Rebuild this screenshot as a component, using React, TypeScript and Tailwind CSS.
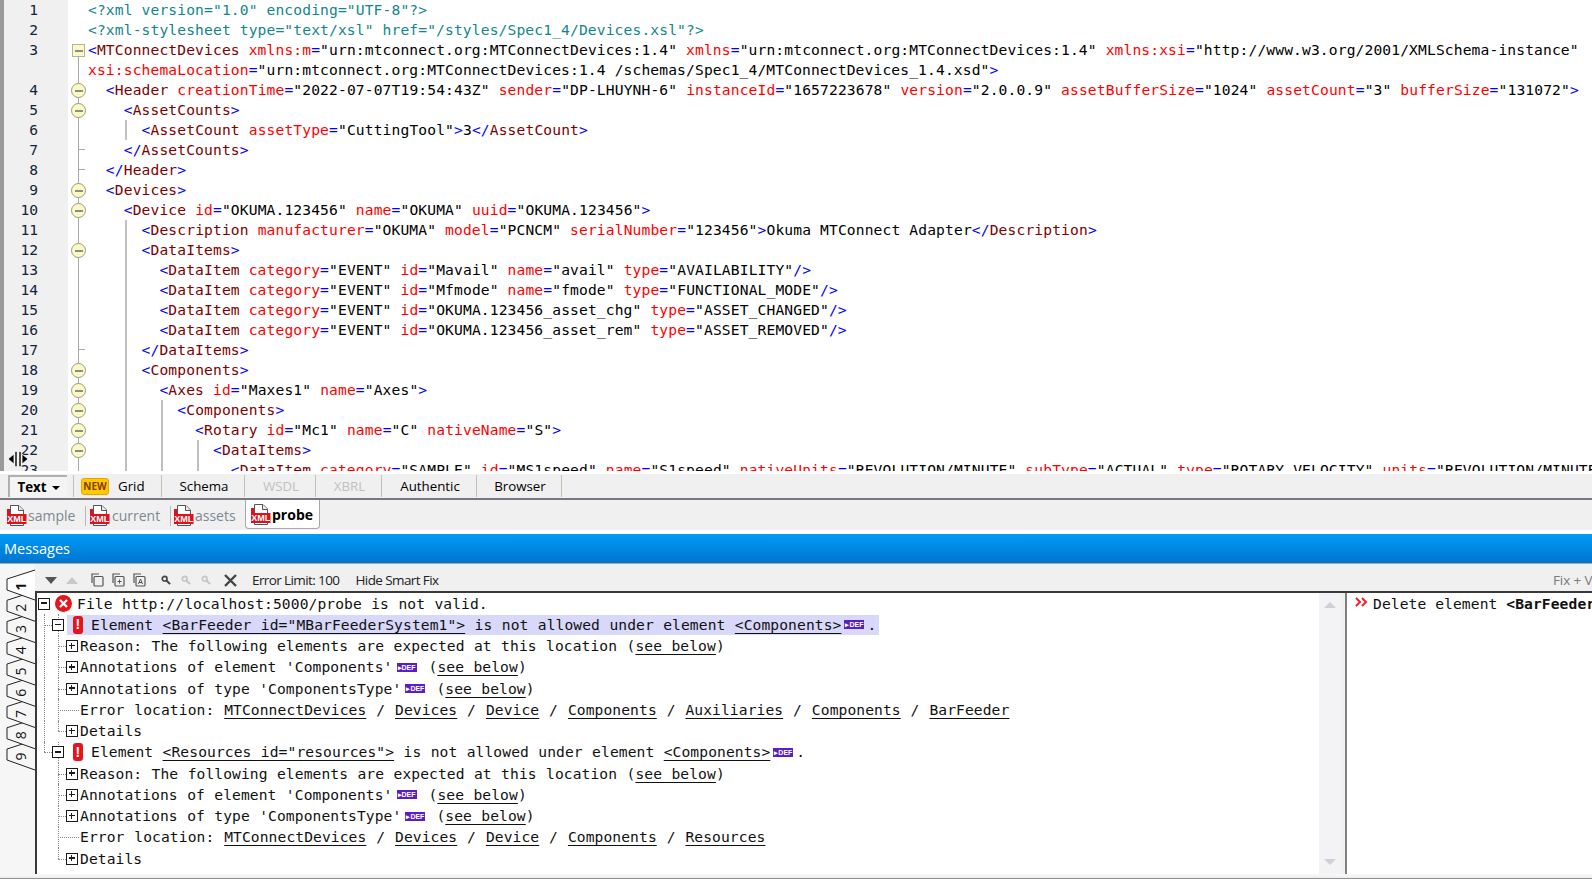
import React from 'react';

type EditorLine = {
  no?: number;
  text: string;
  fold?: 'square' | 'circle' | 'tick';
  guides?: number[];
};

const editorLines: EditorLine[] = [
  { no: 1, text: '<?xml version="1.0" encoding="UTF-8"?>' },
  { no: 2, text: '<?xml-stylesheet type="text/xsl" href="/styles/Spec1_4/Devices.xsl"?>' },
  { no: 3, fold: 'square', text: '<MTConnectDevices xmlns:m="urn:mtconnect.org:MTConnectDevices:1.4" xmlns="urn:mtconnect.org:MTConnectDevices:1.4" xmlns:xsi="http://www.w3.org/2001/XMLSchema-instance"' },
  { text: 'xsi:schemaLocation="urn:mtconnect.org:MTConnectDevices:1.4 /schemas/Spec1_4/MTConnectDevices_1.4.xsd">' },
  { no: 4, fold: 'circle', text: '  <Header creationTime="2022-07-07T19:54:43Z" sender="DP-LHUYNH-6" instanceId="1657223678" version="2.0.0.9" assetBufferSize="1024" assetCount="3" bufferSize="131072">' },
  { no: 5, fold: 'circle', text: '    <AssetCounts>' },
  { no: 6, guides: [37], text: '      <AssetCount assetType="CuttingTool">3</AssetCount>' },
  { no: 7, fold: 'tick', text: '    </AssetCounts>' },
  { no: 8, fold: 'tick', text: '  </Header>' },
  { no: 9, fold: 'circle', text: '  <Devices>' },
  { no: 10, fold: 'circle', text: '    <Device id="OKUMA.123456" name="OKUMA" uuid="OKUMA.123456">' },
  { no: 11, guides: [37], text: '      <Description manufacturer="OKUMA" model="PCNCM" serialNumber="123456">Okuma MTConnect Adapter</Description>' },
  { no: 12, fold: 'circle', guides: [37], text: '      <DataItems>' },
  { no: 13, guides: [37], text: '        <DataItem category="EVENT" id="Mavail" name="avail" type="AVAILABILITY"/>' },
  { no: 14, guides: [37], text: '        <DataItem category="EVENT" id="Mfmode" name="fmode" type="FUNCTIONAL_MODE"/>' },
  { no: 15, guides: [37], text: '        <DataItem category="EVENT" id="OKUMA.123456_asset_chg" type="ASSET_CHANGED"/>' },
  { no: 16, guides: [37], text: '        <DataItem category="EVENT" id="OKUMA.123456_asset_rem" type="ASSET_REMOVED"/>' },
  { no: 17, fold: 'tick', guides: [37], text: '      </DataItems>' },
  { no: 18, fold: 'circle', guides: [37], text: '      <Components>' },
  { no: 19, fold: 'circle', guides: [37], text: '        <Axes id="Maxes1" name="Axes">' },
  { no: 20, fold: 'circle', guides: [37, 73], text: '          <Components>' },
  { no: 21, fold: 'circle', guides: [37, 73], text: '            <Rotary id="Mc1" name="C" nativeName="S">' },
  { no: 22, fold: 'circle', guides: [37, 73, 109], text: '              <DataItems>' },
  { no: 23, guides: [37, 73, 109], text: '                <DataItem category="SAMPLE" id="MS1speed" name="S1speed" nativeUnits="REVOLUTION/MINUTE" subType="ACTUAL" type="ROTARY_VELOCITY" units="REVOLUTION/MINUTE"/>' },
];

// rough xml colouring, good enough for the lines above
function colorXml(src: string) {
  if (src.startsWith('<?')) return <span className="text-[#12868a]">{src}</span>;
  const out: React.ReactNode[] = [];
  const re = /(<\/?)([\w:.-]+)|(\/?>)|([\w:.-]+)(=)("[^"]*")|(\s+|[^<>\s]+)/g;
  let m: RegExpExecArray | null;
  let i = 0;
  while ((m = re.exec(src))) {
    if (m[1]) {
      out.push(<span key={i++} className="text-[#0000ff]">{m[1]}</span>);
      out.push(<span key={i++} className="text-[#800000]">{m[2]}</span>);
    } else if (m[3]) {
      out.push(<span key={i++} className="text-[#0000ff]">{m[3]}</span>);
    } else if (m[4]) {
      out.push(<span key={i++} className="text-[#ff0000]">{m[4]}</span>);
      out.push(<span key={i++} className="text-[#0000ff]">{m[5]}</span>);
      out.push(<span key={i++}>{m[6]}</span>);
    } else {
      out.push(<span key={i++}>{m[7]}</span>);
    }
  }
  return out;
}

function FoldMark({ kind, idx }: { kind?: EditorLine['fold']; idx: number }) {
  return (
    <div className="relative w-[20px] shrink-0 bg-white">
      {idx >= 2 && (
        <span className={`absolute left-[10px] w-px bg-[#a9a9a9] ${idx === 2 ? 'top-[10px] bottom-0' : 'top-0 bottom-0'}`} />
      )}
      {kind === 'tick' && <span className="absolute left-[11px] top-[9px] h-px w-[6px] bg-[#a9a9a9]" />}
      {kind === 'circle' && (
        <span className="absolute left-[3px] top-[3px] flex h-[15px] w-[15px] items-center justify-center rounded-full border border-[#9a9a80] bg-[#fbf9c4]">
          <span className="h-[2px] w-[8px] bg-[#8c8c8c]" />
        </span>
      )}
      {kind === 'square' && (
        <span className="absolute left-[4px] top-[4px] flex h-[13px] w-[13px] items-center justify-center border border-[#b4b49c] bg-[#fbf9c4]">
          <span className="h-[2px] w-[8px] bg-[#8c8c8c]" />
        </span>
      )}
    </div>
  );
}

function ResizeCursor() {
  return (
    <svg className="absolute left-[3px] top-[451px]" width="22" height="16" viewBox="0 0 22 16">
      <path d="M1 8 L7 3 V13 Z M21 8 L15 3 V13 Z" fill="#000" stroke="#fff" strokeWidth="0.8" />
      <rect x="8" y="0.5" width="2" height="15" fill="#000" stroke="#fff" strokeWidth="0.6" />
      <rect x="12" y="0.5" width="2" height="15" fill="#000" stroke="#fff" strokeWidth="0.6" />
    </svg>
  );
}

function Editor() {
  return (
    <div className="relative h-[471px] shrink-0 overflow-hidden border-l-[4px] border-[#9a9a9a] font-['DejaVu_Sans_Mono',monospace] text-[14.62px] text-black">
      {editorLines.map((line, idx) => (
        <div key={idx} className="flex h-5 leading-5">
          <div className="w-[64px] shrink-0 bg-[#f0f0f0] pr-[30px] text-right text-[#13233c]">{line.no}</div>
          <FoldMark kind={line.fold} idx={idx} />
          <div className="relative flex-1 whitespace-pre tracking-[0.13px]">
            {line.guides?.map((g) => (
              <span key={g} className="absolute top-0 bottom-0 w-[2px] bg-[#c0c0c0]" style={{ left: g }} />
            ))}
            {colorXml(line.text)}
          </div>
        </div>
      ))}
      <ResizeCursor />
    </div>
  );
}

const viewTabs = [
  { label: 'Schema', w: 'w-[83px]' },
  { label: 'WSDL', w: 'w-[71px]', off: true },
  { label: 'XBRL', w: 'w-[66px]', off: true },
  { label: 'Authentic', w: 'w-[95px]' },
  { label: 'Browser', w: 'w-[85px]' },
];

function ViewTabs() {
  return (
    <div className="flex h-[24px] shrink-0 items-center bg-[#f0f0f0] pl-[8px] text-[13.3px] text-black">
      <div className="flex h-[22px] w-[59px] items-center justify-center gap-[5px] border-2 border-b-0 border-r-0 border-[#b0b0b0] bg-[#f4f4f4] pt-[1px] font-bold">
        Text
        <span className="h-0 w-0 border-x-[4px] border-t-[4px] border-x-transparent border-t-black" />
      </div>
      <div className="ml-[6px] flex h-[22px] w-[89px] items-center border-x border-[#c4c0b8] pl-[7px]">
        <span className="flex h-[17px] w-[28px] items-center justify-center rounded-[3px] border border-[#f0a000] bg-[#ffc800] text-[10px] font-bold text-[#804000]">
          NEW
        </span>
        <span className="ml-[9px] pt-[1px]">Grid</span>
      </div>
      {viewTabs.map((t) => (
        <div key={t.label} className={`flex h-[22px] items-center justify-center border-r border-[#c4c0b8] pt-[1px] pl-[2px] ${t.w} ${t.off ? 'text-[#c0c0c0]' : ''}`}>
          {t.label}
        </div>
      ))}
    </div>
  );
}

function XmlIcon() {
  return (
    <svg className="shrink-0" width="20" height="21" viewBox="0 0 20 21">
      <path d="M3.5 .5 H12 L16.5 5 V20.5 H3.5 Z" fill="#fff" stroke="#555" />
      <path d="M11.5 .5 V5.5 H16.5" fill="#e8e8e8" stroke="#555" />
      <rect x="0" y="9" width="19.5" height="10" fill="#e0101c" />
      <rect x="0" y="4" width="3" height="5" fill="#e0101c" />
      <text x="9.75" y="17" textAnchor="middle" fontSize="9" fontFamily="Liberation Sans, sans-serif" fontWeight="700" fill="#fff">XML</text>
    </svg>
  );
}

function DocTabs() {
  return (
    <div className="flex h-[30px] shrink-0 items-start bg-[#f0f0f0] pl-[7px] pt-[1px] font-['Open_Sans',sans-serif] text-[14px] text-[#7c8894]">
      <div className="flex h-[28px] w-[78px] items-center gap-[1px]"><XmlIcon />sample</div>
      <span className="mt-[5px] h-[20px] w-px bg-[#b8b8b8]" />
      <div className="ml-[4px] flex h-[28px] w-[80px] items-center gap-[2px]"><XmlIcon />current</div>
      <span className="mt-[5px] h-[20px] w-px bg-[#b8b8b8]" />
      <div className="ml-[3px] flex h-[28px] w-[71px] items-center gap-[1px]"><XmlIcon />assets</div>
      <div className="-mt-[1px] flex h-[29px] w-[75px] items-center gap-[1px] rounded-b-[4px] border border-t-0 border-[#a8a8a8] bg-white pl-[5px] pt-[1px] font-bold text-black"><XmlIcon />probe</div>
    </div>
  );
}

function CopyIcon({ mark }: { mark?: string }) {
  return (
    <svg width="13" height="14" viewBox="0 0 13 14" fill="none" stroke="#555" strokeWidth="1.2">
      <path d="M1 10 V1 H8" />
      <rect x="3" y="3.5" width="9" height="9.5" rx="1" />
      {mark === 'plus' && <path d="M5.5 8.5 H9.5 M7.5 6.5 V10.5" strokeWidth="1" />}
      {mark === 'a' && <path d="M5.5 11 L7.5 6 L9.5 11 M6 9.5 H9" strokeWidth="1" />}
    </svg>
  );
}

function FindIcon({ color }: { color: string }) {
  return (
    <svg width="10" height="11" viewBox="0 0 11 12" fill="none" stroke={color} strokeWidth="1.8">
      <circle cx="4" cy="4" r="2.6" />
      <path d="M6 6 L10 10" strokeWidth="2.2" />
    </svg>
  );
}

function Toolbar() {
  return (
    <div className="flex h-[27px] shrink-0 items-center bg-[#f0f0f0] pt-[5px] font-['Open_Sans',sans-serif] text-[13.5px] tracking-[-0.6px] text-[#222]">
      <span className="ml-[10px] h-0 w-0 border-x-[6px] border-t-[7px] border-x-transparent border-t-[#555]" />
      <span className="ml-[9px] h-0 w-0 border-x-[6px] border-b-[7px] border-x-transparent border-b-[#c8c8c8]" />
      <span className="ml-[13px] flex gap-[8px]">
        <CopyIcon />
        <CopyIcon mark="plus" />
        <CopyIcon mark="a" />
      </span>
      <span className="ml-[15px] flex gap-[10px]">
        <FindIcon color="#444" />
        <FindIcon color="#c4c4c4" />
        <FindIcon color="#c4c4c4" />
      </span>
      <svg className="ml-[13px]" width="13" height="13" viewBox="0 0 13 13" stroke="#444" strokeWidth="2.4">
        <path d="M1 1 L12 12 M12 1 L1 12" />
      </svg>
      <span className="ml-[15px]">Error Limit: 100</span>
      <span className="ml-[16px]">Hide Smart Fix</span>
      <span className="ml-auto w-[39px] overflow-hidden whitespace-nowrap tracking-[-0.1px] text-[#7a7a7a]">Fix + Validate</span>
    </div>
  );
}

function MessageTabs() {
  const tabs = [8, 7, 6, 5, 4, 3, 2, 1, 0];
  return (
    <svg className="absolute left-0 top-0" width="36" height="220" viewBox="0 565 36 220">
      {tabs.map((i) => {
        const y = 21.25 * i;
        return (
          <g key={i}>
            <path
              d={`M35 ${571 + y} L7 ${580 + y} V${591 + y} L35 ${601 + y}`}
              fill={i === 0 ? '#fff' : '#f6f6f6'}
              stroke="#222"
            />
            <text
              x="0"
              y="0"
              transform={`translate(26 ${587.5 + y}) rotate(-90)`}
              textAnchor="middle"
              fontSize="14"
              fontWeight={i === 0 ? 700 : 400}
              fontFamily="Open Sans, sans-serif"
              fill="#111"
            >
              {i + 1}
            </text>
          </g>
        );
      })}
    </svg>
  );
}

function TreeBox({ open }: { open: boolean }) {
  return (
    <span className="relative inline-block h-[12px] w-[12px] shrink-0 border-[1.5px] border-[#1a1a1a] bg-white">
      <span className="absolute left-[1.5px] top-[3.75px] h-[1.5px] w-[6px] bg-[#1a1a1a]" />
      {!open && <span className="absolute left-[3.75px] top-[1.5px] h-[6px] w-[1.5px] bg-[#1a1a1a]" />}
    </span>
  );
}

function Def({ className = '' }: { className?: string }) {
  return (
    <span className={`inline-flex h-[9px] w-[20px] shrink-0 items-center justify-center bg-[#5a1fc4] font-['Liberation_Sans',sans-serif] text-[7px] font-bold leading-none tracking-normal text-white ${className}`}>
      ▸DEF
    </span>
  );
}

function RedBang() {
  return (
    <span className="flex h-[18px] w-[10px] shrink-0 items-center justify-center rounded-[3px] bg-[#e8141c] font-['Liberation_Sans',sans-serif] text-[14px] font-bold text-white">
      !
    </span>
  );
}

function RedCross() {
  return (
    <svg className="shrink-0" width="17" height="17" viewBox="0 0 17 17">
      <circle cx="8.5" cy="8.5" r="8.5" fill="#e8141c" />
      <path d="M5 5 L12 12 M12 5 L5 12" stroke="#fff" strokeWidth="2.4" />
    </svg>
  );
}

const Link = ({ children }: { children: React.ReactNode }) => (
  <span className="underline decoration-1 underline-offset-[3px]">{children}</span>
);

// tree connector bits, they sit on top of the row
function VLine({ x, half }: { x: number; half?: boolean }) {
  return (
    <span
      className={`absolute top-0 border-l border-dotted border-[#888] ${half ? 'h-1/2' : 'bottom-0'}`}
      style={{ left: x }}
    />
  );
}
function HLine({ x, w }: { x: number; w: number }) {
  return <span className="absolute top-1/2 border-t border-dotted border-[#888]" style={{ left: x, width: w }} />;
}

function ChildRows({ path, guideLast }: { path: string[]; guideLast?: boolean }) {
  const rows = [
    <>
      <TreeBox open={false} />
      <span className="ml-[2px]">Reason: The following elements are expected at this location (<Link>see below</Link>)</span>
    </>,
    <>
      <TreeBox open={false} />
      <span className="ml-[2px]">Annotations of element 'Components'</span>
      <Def className="ml-[4px] mr-[12px]" />
      <span>(<Link>see below</Link>)</span>
    </>,
    <>
      <TreeBox open={false} />
      <span className="ml-[2px]">Annotations of type 'ComponentsType'</span>
      <Def className="ml-[4px] mr-[11px]" />
      <span>(<Link>see below</Link>)</span>
    </>,
    <>
      <span className="w-[12px] shrink-0" />
      <span className="ml-[2px] [word-spacing:1px]">
        Error location:{' '}
        {path.map((p, i) => (
          <span key={p + i}>
            {i > 0 && ' / '}
            <Link>{p}</Link>
          </span>
        ))}
      </span>
    </>,
    <>
      <TreeBox open={false} />
      <span className="ml-[2px]">Details</span>
    </>,
  ];
  return (
    <>
      {rows.map((row, i) => (
        <div key={i} className="relative flex h-[21.25px] items-center pl-[29px]">
          {guideLast && <VLine x={7} />}
          <VLine x={21} half={i === rows.length - 1} />
          <HLine x={21} w={i === 3 ? 21 : 8} />
          {row}
        </div>
      ))}
    </>
  );
}

function ElementRow({ hl, children, last }: { hl?: boolean; children: React.ReactNode; last?: boolean }) {
  return (
    <div className="relative flex h-[21.25px] items-center pl-[15px]">
      <VLine x={7} half={last} />
      <HLine x={7} w={8} />
      <VLine x={21} />
      <TreeBox open />
      <div className={`ml-[3px] flex h-[20px] items-center pl-[6px] pr-[3px] ${hl ? 'bg-[#d8d8fa]' : ''}`}>
        <RedBang />
        <span className="ml-[8px]">{children}</span>
      </div>
    </div>
  );
}

function MessageTree() {
  return (
    <div className="min-w-0 flex-1 overflow-hidden whitespace-pre font-['DejaVu_Sans_Mono',monospace] text-[14.62px] tracking-[0.09px] [word-spacing:0.5px] text-[#111]">
      <div className="relative flex h-[21.25px] items-center pl-[1px]">
        <TreeBox open />
        <span className="ml-[5px]"><RedCross /></span>
        <span className="ml-[5px]">File http://localhost:5000/probe is not valid.</span>
      </div>
      <ElementRow hl>
        <span className="inline-flex items-center">
          Element <Link>{'<BarFeeder id="MBarFeederSystem1">'}</Link> is not allowed under element <Link>{'<Components>'}</Link>
          <Def className="ml-[3px] mr-[3px]" />.
        </span>
      </ElementRow>
      <ChildRows guideLast path={['MTConnectDevices', 'Devices', 'Device', 'Components', 'Auxiliaries', 'Components', 'BarFeeder']} />
      <ElementRow last>
        <span className="inline-flex items-center">
          Element <Link>{'<Resources id="resources">'}</Link> is not allowed under element <Link>{'<Components>'}</Link>
          <Def className="ml-[3px] mr-[3px]" />.
        </span>
      </ElementRow>
      <ChildRows path={['MTConnectDevices', 'Devices', 'Device', 'Components', 'Resources']} />
    </div>
  );
}

function Messages() {
  return (
    <div className="relative flex min-h-0 flex-1 flex-col bg-[#f6f6f6]">
      <div className="flex h-[29px] shrink-0 items-center bg-gradient-to-b from-[#009cf5] to-[#0074cf] pl-[4px] font-['Open_Sans',sans-serif] text-[14.5px] text-white">
        Messages
      </div>
      <div className="h-px shrink-0 bg-[#a8a8a8]" />
      <div className="relative flex min-h-0 flex-1">
        <div className="relative h-[310px] w-[35px] shrink-0">
          <MessageTabs />
        </div>
        <div className="flex h-[310px] min-w-0 flex-1 flex-col">
          <Toolbar />
          <div className="flex min-h-0 flex-1 border-l-2 border-t-2 border-[#3a3a3a] bg-white">
            <MessageTree />
            <div className="flex w-[22px] shrink-0 flex-col items-center justify-between bg-[#f3f3f5] py-[9px]">
              <span className="h-0 w-0 border-x-[6px] border-b-[6px] border-x-transparent border-b-[#d0d0d8]" />
              <span className="h-0 w-0 border-x-[6px] border-t-[6px] border-x-transparent border-t-[#d0d0d8]" />
            </div>
            <div className="w-[4px] shrink-0 bg-[#f0f0f0]" />
            <div className="min-w-0 w-[247px] shrink-0 overflow-hidden whitespace-pre border-l-2 border-[#808080] pl-[8px] font-['DejaVu_Sans_Mono',monospace] text-[14.62px] tracking-[0.09px] text-[#111]">
              <div className="flex h-[21.25px] items-center">
                <svg className="mr-[5px] shrink-0 -translate-y-[2px]" width="13" height="10" viewBox="0 0 13 10" fill="none" stroke="#f0202c" strokeWidth="2">
                  <path d="M1 1 L5 5 L1 9 M7 1 L11 5 L7 9" />
                </svg>
                <span>Delete element <b>{'<BarFeeder id="MBarFeederSystem1">'}</b></span>
              </div>
            </div>
          </div>
        </div>
      </div>
      <div className="h-[2px] shrink-0 bg-[#f0f0f0]" />
      <div className="h-px shrink-0 bg-[#909090]" />
      <div className="h-[1px] shrink-0 bg-white" />
    </div>
  );
}

export default function App() {
  return (
    <div className="flex h-[880px] w-[1592px] flex-col overflow-hidden bg-white">
      <Editor />
      <div className="h-[3px] shrink-0 bg-white" />
      <div className="font-['Open_Sans',sans-serif]">
        <ViewTabs />
      </div>
      <div className="h-[2px] shrink-0 bg-[#77777f]" />
      <DocTabs />
      <div className="h-[4px] shrink-0 bg-white" />
      <Messages />
    </div>
  );
}
